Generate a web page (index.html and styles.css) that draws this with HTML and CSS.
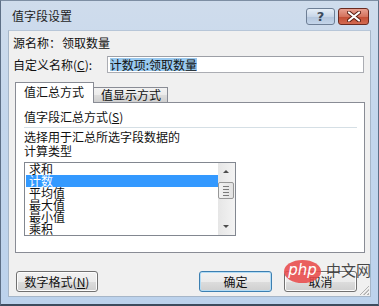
FILE: index.html
```html
<!DOCTYPE html>
<html lang="zh-CN">
  <head>
    <meta charset="UTF-8" />
    <title>值字段设置</title>
    <link rel="stylesheet" href="styles.css">
  </head>
  <body>
    <div class="window">
      <div class="titlebar">
        <span class="title">值字段设置</span>
        <div class="caption-btns">
          <span class="cbtn help">?</span>
          <span class="cbtn close">
            <svg width="14" height="11" viewBox="0 0 14 11">
              <path d="M2 1.5 L12 9.5 M12 1.5 L2 9.5" stroke="#5a1e12" stroke-width="4" stroke-linecap="round"/>
              <path d="M2 1.5 L12 9.5 M12 1.5 L2 9.5" stroke="#fff" stroke-width="2.2" stroke-linecap="round"/>
            </svg>
          </span>
        </div>
      </div>
      <div class="client">
        <div class="row src">
          <span class="lbl">源名称：</span><span>领取数量</span>
        </div>
        <div class="row name">
          <span class="lbl">自定义名称(<u>C</u>):</span>
          <div class="input"><span class="sel">计数项:领取数量</span></div>
        </div>
        <div class="tabs">
          <div class="tab active">值汇总方式</div>
          <div class="tab">值显示方式</div>
        </div>
        <div class="panel">
          <div class="group-title">值字段汇总方式(<u>S</u>)</div>
          <div class="sep"></div>
          <p class="hint">选择用于汇总所选字段数据的<br>计算类型</p>
          <div class="listbox">
            <ul>
              <li>求和</li>
              <li class="selected">计数</li>
              <li>平均值</li>
              <li>最大值</li>
              <li>最小值</li>
              <li>乘积</li>
            </ul>
            <div class="vscroll">
              <span class="arrow up"></span>
              <span class="thumb"><i></i><i></i><i></i><i></i></span>
              <span class="arrow down"></span>
            </div>
          </div>
        </div>
        <div class="buttons">
          <button class="btn wide">数字格式(<u>N</u>)</button>
          <span class="spacer"></span>
          <button class="btn default">确定</button>
          <button class="btn">取消</button>
        </div>
        <div class="grip"></div>
      </div>
      <div class="watermark">
        <span class="php">php</span>
        <span class="cn">中文网</span>
      </div>
    </div>
  </body>
</html>
```

FILE: styles.css
```css
* {
  box-sizing: border-box;
  padding: 0;
  margin: 0;
}
body {
  font-family: "Noto Sans CJK SC", "DejaVu Sans", sans-serif;
  font-size: 12px;
  color: #111;
  background: #fff;
}
.window {
  position: relative;
  width: 379px;
  height: 306px;
  display: flex;
  flex-direction: column;
  background: linear-gradient(to bottom, #cfdcec, #c3d6ec 40%, #bcd2ec);
  border: solid 1px #5d6f86;
  border-top-color: #7d8ea3;
  border-bottom: solid 2px #3d4c5e;
  padding: 0 7px 7px;
}
.titlebar {
  height: 29px;
  display: flex;
  align-items: center;
  justify-content: space-between;
}
.title {
  padding-left: 4px;
  margin-top: 1px;
  font-size: 12px;
  line-height: 14px;
  color: #1e1e1e;
}
.caption-btns {
  display: flex;
  gap: 3px;
  margin-right: 2px;
  margin-top: 1px;
}
.cbtn {
  height: 17px;
  border-radius: 3px;
  display: flex;
  align-items: center;
  justify-content: center;
}
.help {
  width: 29px;
  border: solid 1px #6d7e95;
  background: linear-gradient(to bottom, #e6eef7, #c8d6e8 50%, #b3c5dc 51%, #c4d5ea);
  color: #3c4a5c;
  font-family: "DejaVu Sans", sans-serif;
  font-size: 13px;
  font-weight: bold;
  line-height: 15px;
}
.close {
  width: 31px;
  border: solid 1px #6a2a20;
  background: linear-gradient(to bottom, #e8a091, #d4735e 50%, #c24c34 51%, #d36a50);
}
.client {
  position: relative;
  flex: 1;
  background: #f0f0f0;
  border: solid 1px #a6b6c8;
  border-top-color: #b7c6d8;
  padding: 5px 6px 0 4px;
  display: flex;
  flex-direction: column;
}
.row {
  display: flex;
  align-items: center;
  line-height: 14px;
}
.src {
  height: 14px;
}
.src .lbl {
  width: 49px;
}
.name {
  margin-top: 6px;
  height: 17px;
}
.name .lbl {
  width: 94px;
}
.input {
  width: 258px;
  height: 17px;
  background: #fff;
  border: solid 1px #abadb3;
  border-top-color: #9c9fa6;
  padding: 1px 2px;
  line-height: 13px;
}
.sel {
  background: #99c9ef;
  display: inline-block;
  height: 13px;
}
.tabs {
  margin-top: 9px;
  margin-left: 2px;
  display: flex;
  align-items: flex-end;
  height: 20px;
  position: relative;
  z-index: 1;
}
.tab {
  height: 15px;
  width: 74px;
  border: solid 1px #898c95;
  border-bottom: none;
  border-left: none;
  background: linear-gradient(to bottom, #f2f2f2, #ebebeb 50%, #dddddd 51%, #cfcfcf);
  line-height: 14px;
  padding-left: 7px;
}
.tab.active {
  height: 21px;
  width: 79px;
  margin-bottom: -1px;
  border-left: solid 1px #898c95;
  border-right: solid 1px #898c95;
  background: #fff;
  line-height: 18px;
  padding-left: 8px;
}
.panel {
  margin-left: 2px;
  width: 350px;
  height: 151px;
  background: #fff;
  border: solid 1px #898c95;
  padding: 7px 7px 0 8px;
}
.group-title {
  line-height: 14px;
}
.sep {
  margin-top: 3px;
  height: 1px;
  background: #d5dfe5;
}
.hint {
  margin-top: 2px;
  line-height: 14px;
}
.listbox {
  margin-top: 4px;
  width: 212px;
  height: 74px;
  border: solid 1px #828790;
  display: flex;
}
.listbox ul {
  flex: 1;
  list-style: none;
}
.listbox li {
  height: 12px;
  line-height: 12px;
  padding-left: 3px;
  margin-left: 1px;
}
.listbox li.selected {
  background: #3399ff;
  color: #fff;
}
.vscroll {
  width: 17px;
  background: linear-gradient(to right, #e6e6e6, #f3f3f3);
  position: relative;
}
.arrow {
  width: 0;
  height: 0;
  border-left: solid 3px transparent;
  border-right: solid 3px transparent;
  position: absolute;
  left: 5px;
}
.arrow.up {
  top: 7px;
  border-bottom: solid 3px #4d4d4d;
}
.arrow.down {
  bottom: 7px;
  border-top: solid 3px #4d4d4d;
}
.thumb {
  position: absolute;
  top: 19px;
  left: 0;
  width: 16px;
  height: 17px;
  border: solid 1px #979797;
  border-radius: 2px;
  background: linear-gradient(to right, #f2f2f2, #e2e2e2);
  display: flex;
  flex-direction: column;
  justify-content: center;
  gap: 2px;
  padding: 0 4px;
}
.thumb i {
  display: block;
  height: 1px;
  background: #7a7a7a;
}
.buttons {
  margin-top: 18px;
  margin-left: 3px;
  margin-right: 7px;
  display: flex;
  gap: 12px;
}
.spacer {
  flex: 1;
}
.btn {
  width: 73px;
  height: 21px;
  font: inherit;
  color: #111;
  line-height: 14px;
  border: solid 1px #707070;
  border-radius: 3px;
  background: linear-gradient(to bottom, #f2f2f2, #ebebeb 50%, #dddddd 51%, #cfcfcf);
  box-shadow: inset 0 0 0 1px #fcfcfc;
}
.btn.wide {
  width: 82px;
}
.btn.default {
  border-color: #3c7fb1;
  box-shadow: inset 0 0 0 1px #b3dcf5;
}
.grip {
  position: absolute;
  right: 1px;
  bottom: 1px;
  width: 9px;
  height: 9px;
  background: linear-gradient(135deg, transparent 45%, #b0b0b0 46%, #b0b0b0 52%, transparent 53%, transparent 66%, #b0b0b0 67%, #b0b0b0 73%, transparent 74%, transparent 86%, #b0b0b0 87%);
}
.watermark {
  position: absolute;
  left: 283px;
  top: 259px;
  display: flex;
  align-items: center;
  gap: 5px;
  pointer-events: none;
}
.php {
  width: 37px;
  height: 23px;
  border-radius: 50%;
  background: rgba(232, 74, 74, 0.88);
  color: #fff;
  font-family: "DejaVu Sans", sans-serif;
  font-style: italic;
  font-size: 15px;
  line-height: 20px;
  text-align: center;
}
.cn {
  font-size: 15px;
  line-height: 16px;
  color: rgba(40, 40, 40, 0.85);
  margin-top: -4px;
}
```
